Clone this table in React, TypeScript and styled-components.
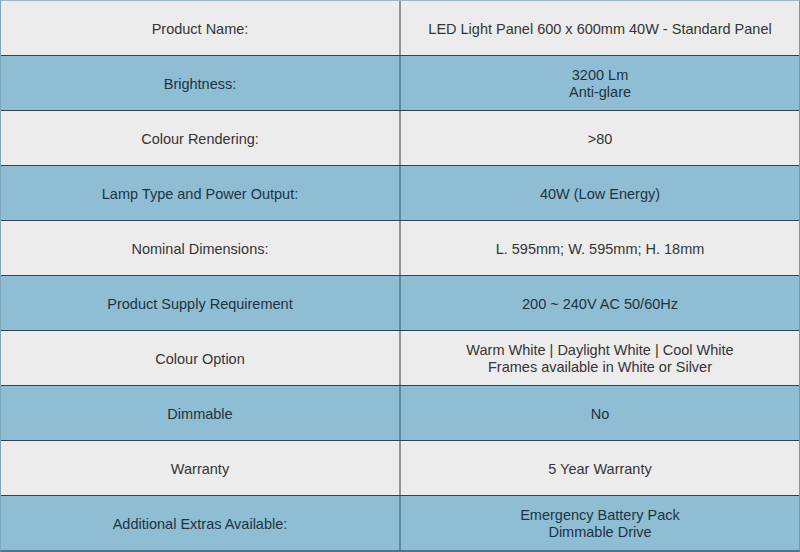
import React from "react";
import styled, { createGlobalStyle } from "styled-components";

interface Spec {
  label: string;
  value: string[];
}

const specs: Spec[] = [
  { label: "Product Name:", value: ["LED Light Panel 600 x 600mm 40W - Standard Panel"] },
  { label: "Brightness:", value: ["3200 Lm", "Anti-glare"] },
  { label: "Colour Rendering:", value: [">80"] },
  { label: "Lamp Type and Power Output:", value: ["40W (Low Energy)"] },
  { label: "Nominal Dimensions:", value: ["L. 595mm; W. 595mm; H. 18mm"] },
  { label: "Product Supply Requirement", value: ["200 ~ 240V AC 50/60Hz"] },
  {
    label: "Colour Option",
    value: ["Warm White | Daylight White | Cool White", "Frames available in White or Silver"],
  },
  { label: "Dimmable", value: ["No"] },
  { label: "Warranty", value: ["5 Year Warranty"] },
  { label: "Additional Extras Available:", value: ["Emergency Battery Pack", "Dimmable Drive"] },
];

const GlobalStyle = createGlobalStyle`
  html, body {
    margin: 0;
    padding: 0;
    background: #ececec;
  }
  body {
    font-family: "Liberation Sans", Arial, sans-serif;
  }
`;

const App = () => {
  return (
    <>
      <GlobalStyle />
      <Table>
        {specs.map((s, i) => (
          <Row key={s.label} $blue={i % 2 === 1}>
            <Cell>{s.label}</Cell>
            <Divider $blue={i % 2 === 1} />
            <Cell>
              {s.value.map((v) => (
                <div key={v}>{v}</div>
              ))}
            </Cell>
          </Row>
        ))}
      </Table>
    </>
  );
};

const Table = styled.div`
  width: 800px;
  height: 552px;
  box-sizing: border-box;
  border-left: 1px solid #7ea6bb;
  border-right: 1px solid #6f9bb3;
  border-top: 1px solid #9fb5c4;
  border-bottom: 2px solid #4d7890;
  display: flex;
  flex-direction: column;
`;

const Row = styled.div<{ $blue: boolean }>`
  display: flex;
  height: 55px;
  box-sizing: border-box;
  background: ${(p) => (p.$blue ? "#8fbed4" : "#ececec")};
  color: ${(p) => (p.$blue ? "#1d3342" : "#353535")};
  border-bottom: 1px solid #2f4350;
  &:last-child {
    border-bottom: none;
    flex: 1;
  }
`;

const Cell = styled.div`
  flex: 1;
  display: flex;
  flex-direction: column;
  align-items: center;
  justify-content: center;
  padding-top: 2px;
  font-size: 14.5px;
  line-height: 17px;
  text-align: center;
`;

const Divider = styled.div<{ $blue: boolean }>`
  width: 2px;
  background: ${(p) => (p.$blue ? "#5d8aa3" : "#8e9398")};
`;

export default App;
